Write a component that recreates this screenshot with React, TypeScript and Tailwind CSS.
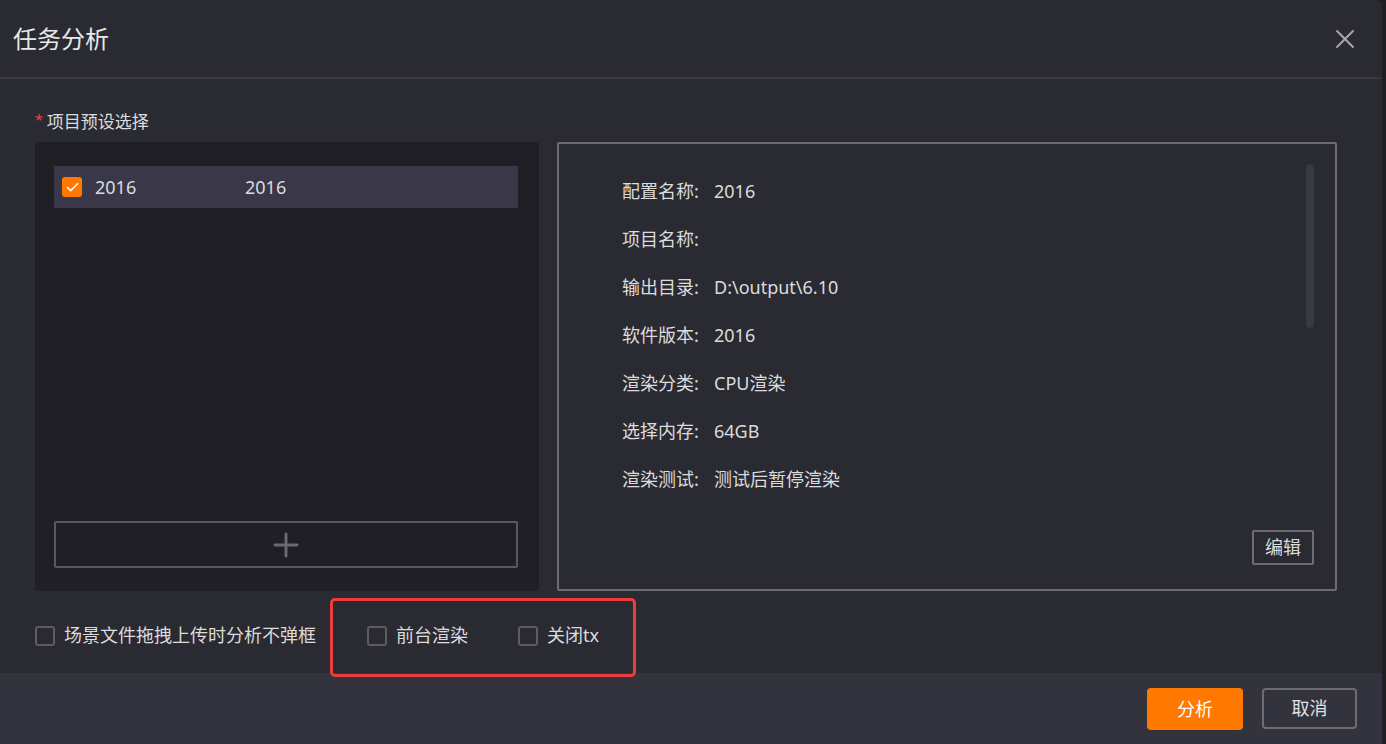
import { X, Plus, Check } from "lucide-react";

const info = [
  { label: "配置名称:", value: "2016" },
  { label: "项目名称:", value: "" },
  { label: "输出目录:", value: "D:\\output\\6.10" },
  { label: "软件版本:", value: "2016" },
  { label: "渲染分类:", value: "CPU渲染" },
  { label: "选择内存:", value: "64GB" },
  { label: "渲染测试:", value: "测试后暂停渲染" },
];

function Box({ label }: { label: string }) {
  return (
    <label className="flex items-center gap-[9px]">
      <span className="w-[20px] h-[20px] rounded-[3px] border-2 border-[#5c5c62]" />
      <span>{label}</span>
    </label>
  );
}

export default function App() {
  return (
    <div
      className="w-[1386px] h-[744px] bg-[#1e1e23] flex text-[18px] text-[#dcdcdc] overflow-hidden"
      style={{ fontFamily: '"Noto Sans", "Noto Sans CJK SC", sans-serif' }}
    >
      <div className="w-[1382px] h-full bg-[#2a2a33] rounded-tr-[6px] flex flex-col">
        {/* Header */}
        <div className="h-[79px] shrink-0 pl-[13px] pr-[21px] flex items-center justify-between border-b-2 border-[#38383e]">
          <h1 className="text-[24px] text-[#e8e8e8] leading-none">任务分析</h1>
          <X size={32} strokeWidth={1.4} className="text-[#a8a8ac]" />
        </div>

        {/* Body */}
        <div className="flex-1 flex flex-col pl-[35px] pr-[45px]">
          <div className="mt-[29px] h-[27px] flex items-center text-[17px] leading-none">
            <span className="text-[#f0453f] mr-[4px] text-[14px] -mt-[4px]">*</span>
            <span>项目预设选择</span>
          </div>

          <div className="mt-[7px] h-[449px] flex gap-[18px]">
            {/* Preset list */}
            <div className="w-[504px] h-full bg-[#1f1f25] rounded-[3px] pl-[19px] pr-[21px] pt-[24px] pb-[23px] flex flex-col">
              <div className="h-[42px] bg-[#393748] flex items-center pl-[8px]">
                <span className="w-[20px] h-[20px] rounded-[3px] bg-[#ff7800] flex items-center justify-center">
                  <Check size={15} strokeWidth={2.5} className="text-white" />
                </span>
                <span className="ml-[13px] w-[150px]">2016</span>
                <span>2016</span>
              </div>
              <button className="mt-auto h-[47px] border-2 border-[#58585e] rounded-[2px] flex items-center justify-center">
                <Plus size={38} strokeWidth={1.8} className="text-[#6a6a70]" />
              </button>
            </div>

            {/* Preset detail */}
            <div className="relative flex-1 h-full border-2 border-[#6c6c72] rounded-[2px] pl-[63px] pt-[23px] pr-[21px] pb-[24px] flex flex-col">
              <div className="absolute right-[21px] top-[20px] w-[8px] h-[164px] rounded-full bg-[#393944]" />
              {info.map((row) => (
                <div key={row.label} className="h-[48px] flex items-center">
                  <span className="w-[92px]">{row.label}</span>
                  <span>{row.value}</span>
                </div>
              ))}
              <button className="mt-auto self-end w-[62px] h-[35px] border-2 border-[#6c6c72] rounded-[2px] flex items-center justify-center">
                编辑
              </button>
            </div>
          </div>

          {/* Options */}
          <div className="mt-[31px] h-[27px] flex items-center">
            <Box label="场景文件拖拽上传时分析不弹框" />
            <div className="relative ml-[51px] flex items-center gap-[50px]">
              <div className="absolute -left-[37px] -right-[37px] -top-[24px] -bottom-[28px] border-[3px] border-[#ee3b3b] rounded-[5px]" />
              <Box label="前台渲染" />
              <Box label="关闭tx" />
            </div>
          </div>
        </div>

        {/* Footer */}
        <div className="h-[71px] shrink-0 bg-[#33333d] flex items-start justify-end gap-[19px] pt-[15px] pr-[25px]">
          <button className="w-[96px] h-[42px] bg-[#ff7800] rounded-[4px] text-white">分析</button>
          <button className="w-[95px] h-[41px] border-2 border-[#6c6c72] rounded-[4px] text-[#e0e0e0]">取消</button>
        </div>
      </div>
    </div>
  );
}
